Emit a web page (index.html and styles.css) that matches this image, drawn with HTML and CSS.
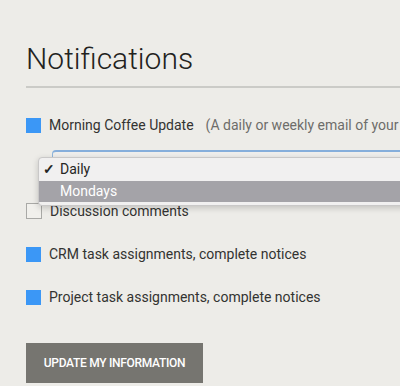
FILE: index.html
```html
<!DOCTYPE html>
<html>
<head>
<meta charset="utf-8">
<link rel="stylesheet" href="styles.css">
</head>
<body>
<div class="page">
  <h1 class="title">Notifications</h1>
  <div class="rule"></div>
  <div class="row first">
    <span class="box checked"></span>
    <span class="label">Morning Coffee Update</span>
    <span class="note">(A daily or weekly email of your activity)</span>
  </div>
  <div class="select-wrap">
    <div class="select"></div>
    <ul class="menu">
      <li class="opt"><span class="check">✓</span>Daily</li>
      <li class="opt hl">Mondays</li>
    </ul>
  </div>
  <div class="row">
    <span class="box"></span>
    <span class="label">Discussion comments</span>
  </div>
  <div class="row">
    <span class="box checked"></span>
    <span class="label">CRM task assignments, complete notices</span>
  </div>
  <div class="row">
    <span class="box checked"></span>
    <span class="label">Project task assignments, complete notices</span>
  </div>
  <button class="btn">UPDATE MY INFORMATION</button>
</div>
</body>
</html>
```
FILE: styles.css
```css
html, body {
  margin: 0;
  padding: 0;
  background: #edece8;
  overflow: hidden;
}
.page {
  padding: 41px 0 0 26px;
  font-family: Roboto, "Liberation Sans", sans-serif;
  color: #333331;
}
.title {
  margin: 0;
  font-size: 30px;
  line-height: 36px;
  font-weight: 300;
  color: #222220;
}
.rule {
  margin-top: 9px;
  height: 2px;
  background: #cbcbc7;
}
.row {
  display: flex;
  align-items: center;
  height: 18px;
  margin-top: 25px;
  font-size: 14px;
  white-space: nowrap;
}
.row.first {
  margin-top: 28px;
}
.box {
  width: 15px;
  height: 15px;
  flex: none;
  background: #3b97f6;
  margin-right: 8px;
  box-sizing: border-box;
}
.box:not(.checked) {
  background: #f1f0ec;
  border: 1px solid #a9a9a6;
  width: 16px;
  height: 16px;
}
.label {
  color: #333331;
}
.note {
  margin-left: 12px;
  color: #6d6d6a;
}
.select-wrap {
  position: relative;
  margin: 16px 0 0 26px;
  padding-bottom: 3px;
  height: 24px;
}
.select {
  height: 22px;
  border: 1px solid #8fb6dc;
  border-top: 2px solid #86aedb;
  border-radius: 4px 0 0 4px;
  border-right: none;
  background: #efeeec;
}
.menu {
  position: absolute;
  left: -14px;
  top: 7px;
  width: 400px;
  margin: 0;
  padding: 0 0 3px;
  list-style: none;
  background: #f1f0f0;
  border: 1px solid #c9c8c8;
  border-radius: 4px 0 0 4px;
  box-shadow: 0 2px 6px rgba(0,0,0,0.18);
  font-size: 14px;
}
.opt {
  height: 23px;
  line-height: 23px;
  padding-left: 21px;
  position: relative;
  color: #262624;
}
.opt.hl {
  background: #a4a3a8;
  color: #fff;
  height: 21px;
  line-height: 21px;
}
.check {
  position: absolute;
  left: 4px;
  font-size: 14px;
  font-weight: 700;
}
.btn {
  display: block;
  margin-top: 37px;
  width: 177px;
  height: 40px;
  border: none;
  background: #767570;
  color: #fff;
  font-family: Roboto, "Liberation Sans", sans-serif;
  font-size: 12px;
  font-weight: 500;
  letter-spacing: -0.3px;
  padding: 0;
}
```
